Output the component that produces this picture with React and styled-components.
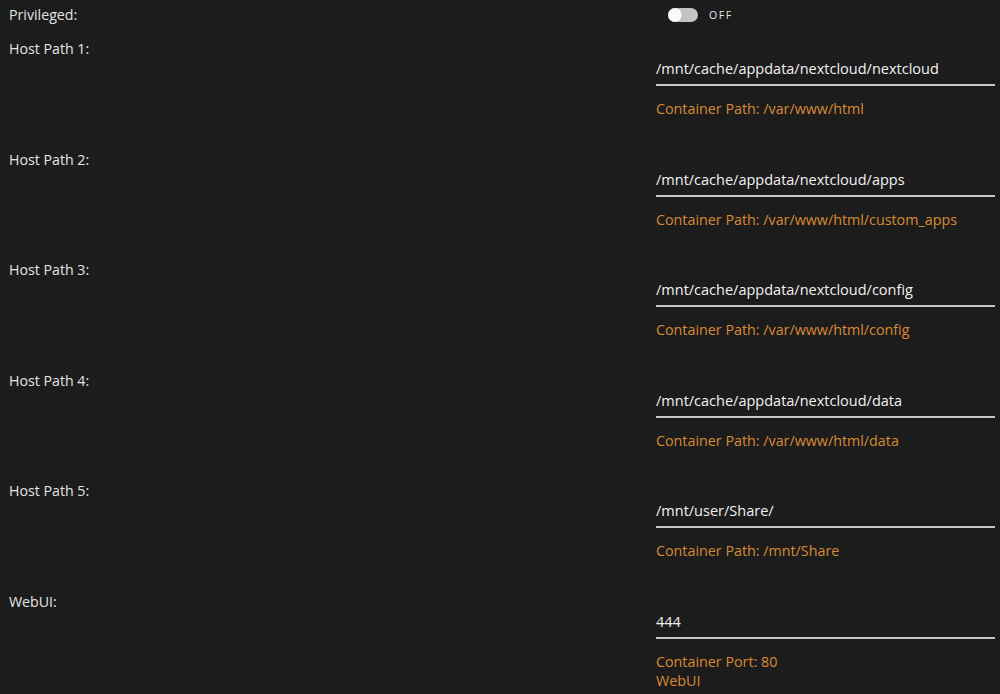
import React from "react";
import styled, { createGlobalStyle } from "styled-components";

const GlobalStyle = createGlobalStyle`
  html, body {
    margin: 0;
    background: #1c1c1c;
  }
  body {
    font-family: "Open Sans", "Noto Sans", sans-serif;
    color: #e4e4e4;
  }
`;

const Page = styled.div`
  padding: 5px 5px 0 9px;
  height: 694px;
  box-sizing: border-box;
  overflow: hidden;
`;

const Row = styled.div`
  display: grid;
  grid-template-columns: 647px 1fr;
  min-height: ${(p) => p.$height ?? 110.6}px;
`;

const Label = styled.div`
  font-size: 14.2px;
  line-height: 20px;
  color: #e4e4e4;
`;

const Field = styled.div`
  display: flex;
  flex-direction: column;
  padding-top: ${(p) => p.$top ?? 20}px;
`;

const Input = styled.div`
  font-size: 14.5px;
  line-height: 20px;
  color: #f2f2f2;
  padding-bottom: 5px;
  border-bottom: 2px solid #c8c8c8;
`;

const Hint = styled.div`
  margin-top: 13px;
  font-size: 14.3px;
  line-height: 19px;
  color: #d98a30;
`;

const SwitchWrap = styled.div`
  display: flex;
  align-items: center;
  gap: 11px;
  padding-left: 12px;
  height: 20px;
`;

const Track = styled.div`
  position: relative;
  width: 30px;
  height: 14px;
  border-radius: 7px;
  background: #c4c4c4;
`;

const Knob = styled.div`
  position: absolute;
  left: 0;
  top: 0;
  width: 14px;
  height: 14px;
  border-radius: 50%;
  background: #fafafa;
  box-shadow: 0 0 1px rgba(0, 0, 0, 0.4);
`;

const SwitchText = styled.span`
  font-size: 10.5px;
  letter-spacing: 1.6px;
  color: #e4e4e4;
`;

const paths = [
  ["Host Path 1:", "/mnt/cache/appdata/nextcloud/nextcloud", "Container Path: /var/www/html"],
  ["Host Path 2:", "/mnt/cache/appdata/nextcloud/apps", "Container Path: /var/www/html/custom_apps"],
  ["Host Path 3:", "/mnt/cache/appdata/nextcloud/config", "Container Path: /var/www/html/config"],
  ["Host Path 4:", "/mnt/cache/appdata/nextcloud/data", "Container Path: /var/www/html/data"],
  ["Host Path 5:", "/mnt/user/Share/", "Container Path: /mnt/Share"],
];

export default function App() {
  return (
    <>
      <GlobalStyle />
      <Page>
        <Row $height={34}>
          <Label>Privileged:</Label>
          <Field $top={0}>
            <SwitchWrap>
              <Track>
                <Knob />
              </Track>
              <SwitchText>OFF</SwitchText>
            </SwitchWrap>
          </Field>
        </Row>
        {paths.map(([label, host, container]) => (
          <Row key={label}>
            <Label>{label}</Label>
            <Field>
              <Input>{host}</Input>
              <Hint>{container}</Hint>
            </Field>
          </Row>
        ))}
        <Row>
          <Label>WebUI:</Label>
          <Field>
            <Input>444</Input>
            <Hint>
              Container Port: 80
              <br />
              WebUI
            </Hint>
          </Field>
        </Row>
      </Page>
    </>
  );
}
